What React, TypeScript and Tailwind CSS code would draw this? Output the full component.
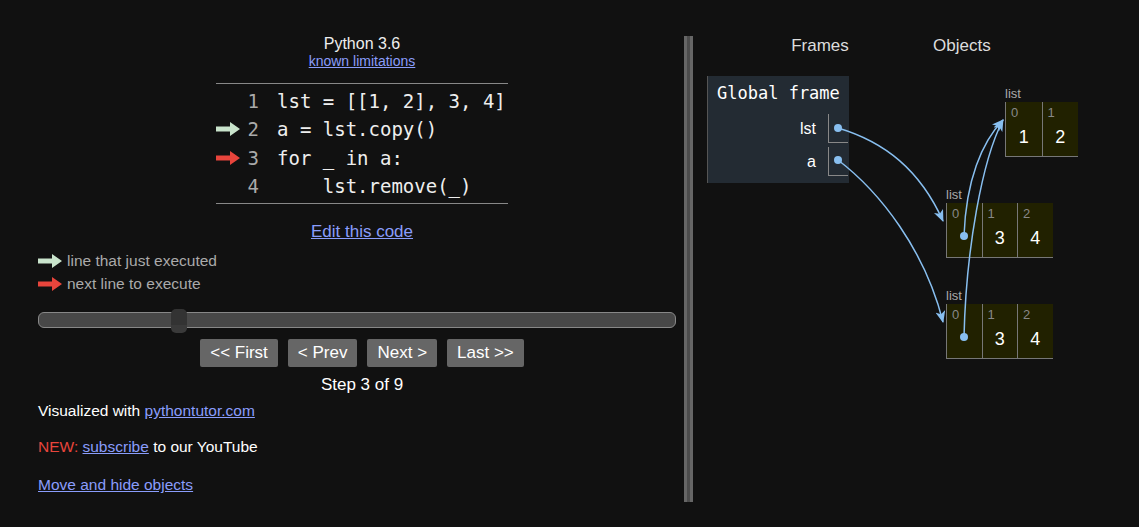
import React from "react";

const sans = { fontFamily: '"Liberation Sans", Arial, sans-serif' };
const mono = { fontFamily: '"DejaVu Sans Mono", monospace' };

const Arrow = ({ color }: { color: string }) => (
  <svg width="24" height="14" viewBox="0 0 24 14">
    <path d="M0 4.5 H14 V0 L24 7 L14 14 V9.5 H0 Z" fill={color} />
  </svg>
);

const codeLines = [
  { n: 1, text: "lst = [[1, 2], 3, 4]", arrow: null },
  { n: 2, text: "a = lst.copy()", arrow: "#c9e4cc" },
  { n: 3, text: "for _ in a:", arrow: "#e8453c" },
  { n: 4, text: "    lst.remove(_)", arrow: null },
];

interface ListProps {
  values: (string | null)[];
  cellW: number;
  x: number;
  y: number;
}

const ListObj = ({ values, cellW, x, y }: ListProps) => (
  <div className="absolute" style={{ left: x, top: y }}>
    <div className="text-[13px] text-[#aaa] leading-[15px] mb-[1px]">list</div>
    <div className="flex bg-[#212100] border-b border-[#777]">
      {values.map((v, i) => (
        <div
          key={i}
          className="border-l border-[#777] h-[54px] flex flex-col"
          style={{ width: cellW }}
        >
          <div className="text-[13px] text-[#888] pl-[5px] pt-[3px] leading-[15px]">
            {i}
          </div>
          <div className="text-[18px] text-white text-center mt-[7px] leading-[20px]">
            {v}
          </div>
        </div>
      ))}
    </div>
  </div>
);

export default function App() {
  const blue = "#88bff0";
  return (
    <div className="relative w-[1139px] h-[527px] bg-[#111] overflow-hidden" style={sans}>
      <div className="flex h-full">
        {/* Left panel */}
        <div className="w-[684px] pl-[38px] pt-[35px] flex flex-col">
          <div className="w-[648px] flex flex-col items-center">
            <div className="text-[16px] text-[#eee] leading-[18px]">Python 3.6</div>
            <a className="text-[14px] text-[#8a9dfc] underline leading-[17px]">
              known limitations
            </a>
            <div className="mt-[13px] w-[292px] border-y border-[#888] pt-[3px] pb-[3px]">
              {codeLines.map((l) => (
                <div key={l.n} className="flex items-center h-[28.3px]">
                  <div className="w-[28px] flex items-center">
                    {l.arrow && <Arrow color={l.arrow} />}
                  </div>
                  <div className="w-[15px] text-right text-[19px] text-[#aaa]" style={mono}>
                    {l.n}
                  </div>
                  <div className="pl-[18px] text-[19px] text-[#eee] whitespace-pre" style={mono}>
                    {l.text}
                  </div>
                </div>
              ))}
            </div>
            <a className="mt-[18px] text-[17px] text-[#8a9dfc] underline leading-[20px]">
              Edit this code
            </a>
          </div>
          <div className="mt-[9px] flex flex-col gap-[4px] text-[15.5px] text-[#aaa]">
            <div className="flex items-center gap-[5px] h-[19px]">
              <Arrow color="#c9e4cc" />
              <span>line that just executed</span>
            </div>
            <div className="flex items-center gap-[5px] h-[19px]">
              <Arrow color="#e8453c" />
              <span>next line to execute</span>
            </div>
          </div>
          <div className="relative mt-[19px] w-[638px] h-[16px] rounded-[6px] bg-[#484848] border border-[#888]">
            <div className="absolute left-[132px] top-[-4px] w-[16px] h-[24px] rounded-[5px] bg-[#333] border-b-[8px] border-[#3a3a3a]" />
          </div>
          <div className="w-[648px] mt-[11px] flex justify-center gap-[10px] text-[17px] text-white">
            <button className="h-[28px] px-[10px] bg-[#666] rounded-[2px]">&lt;&lt; First</button>
            <button className="h-[28px] px-[10px] bg-[#666] rounded-[2px]">&lt; Prev</button>
            <button className="h-[28px] px-[10px] bg-[#666] rounded-[2px]">Next &gt;</button>
            <button className="h-[28px] px-[10px] bg-[#666] rounded-[2px]">Last &gt;&gt;</button>
          </div>
          <div className="w-[648px] mt-[8px] text-center text-[17px] text-white leading-[20px]">
            Step 3 of 9
          </div>
          <div className="mt-[6px] text-[15.5px] text-white leading-[20px]">
            Visualized with <a className="text-[#8a9dfc] underline">pythontutor.com</a>
          </div>
          <div className="mt-[16px] text-[15.5px] text-white leading-[20px]">
            <span className="text-[#e8453c]">NEW: </span>
            <a className="text-[#8a9dfc] underline">subscribe</a> to our YouTube
          </div>
          <div className="mt-[18px] text-[15.5px] leading-[20px]">
            <a className="text-[#8a9dfc] underline">Move and hide objects</a>
          </div>
        </div>

        {/* Divider */}
        <div className="mt-[36px] h-[466px] w-[9px] border-x-[3px] border-[#666] bg-[#4c4c4c]" />

        {/* Right panel */}
        <div className="relative flex-1 pl-[14px] pt-[36px]">
          <div className="flex text-[17px] text-[#ddd] leading-[20px]">
            <div className="w-[226px] text-center">Frames</div>
            <div className="w-[54px] text-center whitespace-nowrap">Objects</div>
          </div>
          <div className="mt-[20px] w-[142px] h-[107px] bg-[#232b33] border-l border-[#555]">
            <div className="text-[17px] text-white pl-[9px] pt-[6px] leading-[22px]" style={mono}>
              Global frame
            </div>
            <div className="mt-[10px] flex flex-col gap-[4px]">
              <div className="flex items-center justify-end pr-[1px]">
                <span className="text-[16px] text-white pr-[12px]">lst</span>
                <div className="w-[20px] h-[29px] border-l border-b border-[#888]" />
              </div>
              <div className="flex items-center justify-end pr-[1px]">
                <span className="text-[16px] text-white pr-[12px]">a</span>
                <div className="w-[20px] h-[29px] border-l border-b border-[#888]" />
              </div>
            </div>
          </div>
          <ListObj values={["1", "2"]} cellW={36.5} x={312} y={86} />
          <ListObj values={[null, "3", "4"]} cellW={35.5} x={253} y={187} />
          <ListObj values={[null, "3", "4"]} cellW={35.5} x={253} y={288} />
        </div>
      </div>

      {/* Pointer arrows */}
      <svg className="absolute inset-0 pointer-events-none" width="1139" height="527">
        <defs>
          <marker
            id="head"
            viewBox="0 0 12 10"
            refX="11"
            refY="5"
            markerWidth="12"
            markerHeight="10"
            markerUnits="userSpaceOnUse"
            orient="auto"
          >
            <path d="M0 0 L12 5 L0 10 L3 5 Z" fill={blue} />
          </marker>
        </defs>
        <g fill="none" stroke={blue} strokeWidth="1.5">
          <path d="M838 128 C 885 142 920 170 943 221" markerEnd="url(#head)" />
          <path d="M838 160 C 880 192 925 250 943 322" markerEnd="url(#head)" />
          <path d="M964 236 C 966 180 982 142 1003 120" markerEnd="url(#head)" />
          <path d="M964 337 C 966 250 982 160 1003 120" markerEnd="url(#head)" />
        </g>
        <g fill={blue}>
          <circle cx="838" cy="128" r="4" />
          <circle cx="838" cy="160" r="4" />
          <circle cx="964" cy="236" r="4" />
          <circle cx="964" cy="337" r="4" />
        </g>
      </svg>
    </div>
  );
}
